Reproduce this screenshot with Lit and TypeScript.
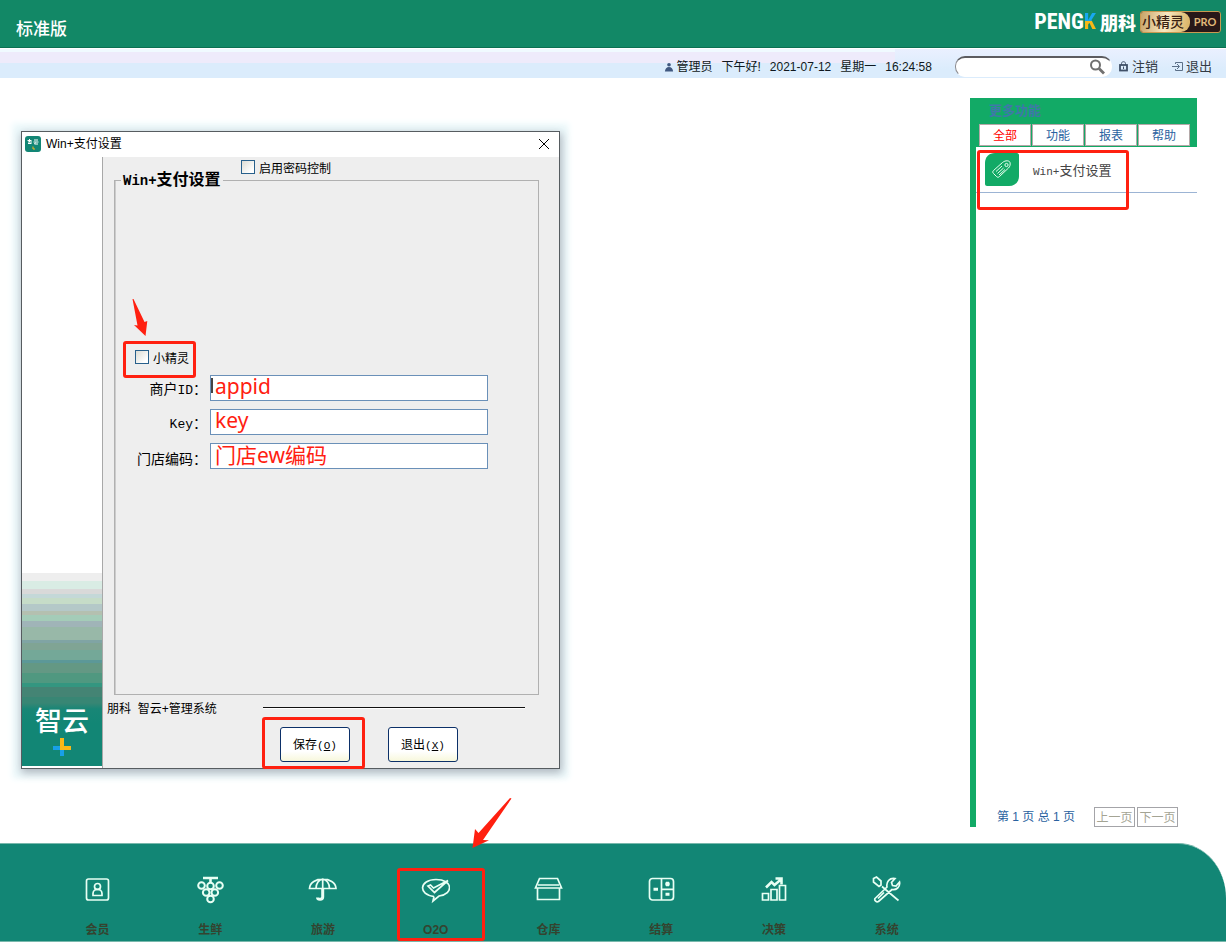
import { LitElement, html, css, svg } from "lit";
import { customElement, property, state } from "lit/decorators.js";
import { classMap } from "lit/directives/class-map.js";

const NAV = [
  {
    name: "会员",
    icon: svg`<rect x="3.500" y="4" width="22" height="21" rx="2"/><circle cx="14.500" cy="11.500" r="3"/><path d="M10 20.500v-2c0-5.500 9-5.500 9 0v2z"/>`,
  },
  {
    name: "生鲜",
    icon: svg`<path d="M7 3h15M14.500 3v5" stroke-width="2.600"/><g stroke-width="2"><circle cx="5.500" cy="10.500" r="3.300"/><circle cx="14.500" cy="11" r="3.300"/><circle cx="23.500" cy="10.500" r="3.300"/><circle cx="10.200" cy="17.500" r="3.300"/><circle cx="18.800" cy="17.500" r="3.300"/><circle cx="14.500" cy="24" r="3.300"/></g>`,
  },
  {
    name: "旅游",
    icon: svg`<path d="M1.500 13.500C2 1 27.500 1 28 13.500zM8 13.500C8 8 11 4.500 14.700 4.200 18.500 4.500 21.500 8 21.500 13.500M14.700 4v10"/><path d="M14.700 13v9c0 3-5 3-5.200.5" stroke-width="3"/>`,
  },
  {
    name: "O2O",
    marked: true,
    icon: svg`<path d="M13 21.500C-3 20-2 4.500 15 4.500s18 14.500 3 16.500l-6 5 1-4.500"/><path d="M7 11l2.500-1 3 3L27 5.500 13.500 17.500z"/>`,
  },
  {
    name: "仓库",
    icon: svg`<path d="M5.500 3.500h18l4 9.500h-26zM4 10h21M3.500 13v11.500h22V13"/>`,
  },
  {
    name: "结算",
    icon: svg`<rect x="2.500" y="3.500" width="24" height="21.500" rx="3"/><path d="M14.500 3.500V25M14.500 14.300h12"/><path d="M6.500 14.300h4.500M18.300 9h4.400M20.500 6.800v4.400M18.500 19.300h4" stroke-width="3"/>`,
  },
  {
    name: "决策",
    icon: svg`<path d="M2.500 18.500h6V25h-6zM11 14.500h6V25h-6zM19.500 10.500h6V25h-6z"/><path d="M6 12.500l5.500-5.500 3 3 7-6M15.500 3.500h6V9.500" stroke-width="2.600"/>`,
  },
  {
    name: "系统",
    icon: svg`<path d="M1.500 3.500l3-1.500 4.500 4v4l-2 1.500-5.500-4.500zM10 11.500l7 6 9.500 8M3 23.500l12-11.500c-1-5 2.500-9.500 8-8.500l-3.500 4 1 3 3.500.5 3.500-4c1 5-3.500 8.500-7.500 7.500L6.500 26.500c-2 1-4.500-1-3.500-3zM6 23.500l6-6"/>`,
  },
];

@customElement("top-banner")
class TopBanner extends LitElement {
  static styles = css`
    :host {
      display: flex;
      justify-content: space-between;
      align-items: center;
      height: 48px;
      box-sizing: border-box;
      padding: 0 5px 4px 16px;
      background: #128866;
      border-bottom: 1px solid #0b7052;
      color: #fff;
    }
    .edition {
      padding-top: 16px;
      font-size: 17px;
      font-weight: 500;
      line-height: 20px;
    }
    .brand {
      display: flex;
      align-items: center;
      gap: 4px;
      white-space: nowrap;
    }
    .name {
      font: 700 22px/24px "Roboto Condensed", "Liberation Sans", sans-serif;
    }
    .k {
      background: linear-gradient(#18a8f0 50%, #f8b818 50%);
      -webkit-background-clip: text;
      background-clip: text;
      color: transparent;
    }
    .cn {
      font: 900 18px/24px "Noto Sans CJK SC", sans-serif;
    }
    .badge {
      display: flex;
      box-sizing: border-box;
      width: 81px;
      height: 22px;
      border: 1px solid #c89a50;
      border-radius: 3px;
      overflow: hidden;
      background: #281818;
      font: 500 14px/19px "Noto Sans CJK SC", sans-serif;
      color: #382010;
    }
    .cnbadge {
      width: 48px;
      padding-left: 1px;
      background: linear-gradient(100deg, #c8a468, #f8e8c0 50%, #d8b060);
      border-radius: 0 9px 9px 0;
    }
    .pro {
      flex: 1;
      text-align: center;
      font: 700 11px/20px Lato, sans-serif;
      color: #e0b878;
    }
  `;
  render() {
    return html`
      <div class="edition">标准版</div>
      <div class="brand">
        <span class="name">PENG<span class="k">K</span></span>
        <span class="cn">朋科</span>
        <span class="badge"><span class="cnbadge">小精灵</span><span class="pro">PRO</span></span>
      </div>
    `;
  }
}

@customElement("status-bar")
class StatusBar extends LitElement {
  static styles = css`
    :host {
      display: flex;
      justify-content: flex-end;
      align-items: center;
      height: 29px;
      margin-top: 1px;
      box-sizing: border-box;
      padding: 6px 14px 0 0;
      background:
        linear-gradient(#f0faff 3px, #eeebfb 3px, #eeebfb 14px, #dbecfc 14px) left / 73% 100% no-repeat,
        linear-gradient(#eaf0ff, #dbecfc 70%);
      font-size: 12px;
      line-height: 20px;
      color: #101820;
      white-space: nowrap;
    }
    svg {
      display: block;
      flex: none;
    }
    .info {
      display: flex;
      align-items: center;
      gap: 9px;
      margin-right: 23px;
    }
    .user {
      display: flex;
      align-items: center;
      gap: 2px;
    }
    .search {
      display: flex;
      align-items: center;
      box-sizing: border-box;
      width: 157px;
      height: 21px;
      padding: 0 6px 0 10px;
      margin-right: 6px;
      border: 1px solid #fff;
      border-top: 2px solid #5c5c60;
      border-left-color: #8c8c90;
      border-radius: 10px;
      background: #fff;
    }
    .search input {
      flex: 1;
      min-width: 0;
      border: 0;
      padding: 0;
      outline: 0;
      background: none;
    }
    .search button {
      border: 0;
      padding: 0;
      background: none;
    }
    .link {
      display: flex;
      align-items: center;
      gap: 3px;
      margin-left: 14px;
      font-size: 13px;
      color: #333a44;
      text-decoration: none;
    }
    .search + .link {
      margin-left: 0;
    }
  `;
  render() {
    return html`
      <div class="info">
        <span class="user">
          <svg width="10" height="12" viewBox="0 0 11 12" fill="#405880">
            <circle cx="5.500" cy="3.500" r="2" /><path d="M1 11c0-3 2-5 4.500-5S10 8 10 11z" />
          </svg>
          管理员
        </span>
        <span>下午好!</span>
        <time>2021-07-12</time>
        <span>星期一</span>
        <time>16:24:58</time>
      </div>
      <div class="search">
        <input type="text" aria-label="搜索" />
        <button aria-label="搜索">
          <svg width="16" height="16" viewBox="0 0 16 16" fill="none" stroke="#707070">
            <circle cx="6.500" cy="6" r="4.500" stroke-width="2" /><path d="M10 9.500l5 5" stroke-width="2.800" />
          </svg>
        </button>
      </div>
      <a class="link" href="#">
        <svg width="11" height="12" viewBox="0 0 11 12" fill="none" stroke="#405068">
          <path d="M3.500 4V2.500c0-2.400 4-2.400 4 0V4" /><rect x="2" y="4" width="7" height="5.500" stroke-width="1.800" /><path d="M5.500 5.500v2.500" />
        </svg>
        注销
      </a>
      <a class="link" href="#">
        <svg width="11" height="12" viewBox="0 0 11 12" fill="none" stroke="#5c7088">
          <path d="M3.500 3V1.500h7v8h-7V8M0 5.500h7M5 3l2.500 2.500L5 8" />
        </svg>
        退出
      </a>
    `;
  }
}

@customElement("settings-dialog")
class SettingsDialog extends LitElement {
  static styles = css`
    :host {
      display: flex;
      flex-direction: column;
      box-sizing: border-box;
      width: 539px;
      height: 638px;
      border: 1px solid #565c60;
      background: #fff;
      box-shadow: 1px 3px 8px 1px rgba(60, 60, 80, 0.35), 0 1px 6px 9px #eefafc;
      font-size: 12px;
      color: #000;
    }
    svg {
      display: block;
      flex: none;
    }
    .mono {
      font-family: "Liberation Mono", monospace;
    }
    .title {
      display: flex;
      align-items: center;
      gap: 5px;
      height: 25px;
      padding: 0 9px 2px 3px;
      box-sizing: border-box;
      line-height: 20px;
    }
    .title h1 {
      flex: 1;
      margin: 0;
      font-size: 12px;
      font-weight: 400;
    }
    .close {
      border: 0;
      padding: 0;
      background: none;
    }
    .body {
      display: flex;
      flex: 1;
      min-height: 0;
    }
    .side {
      display: flex;
      flex-direction: column;
      justify-content: flex-end;
      width: 80px;
      padding-bottom: 2px;
      border-right: 1px solid #a8a8a8;
    }
    .art {
      display: flex;
      flex-direction: column;
      align-items: center;
      gap: 1px;
      box-sizing: border-box;
      height: 193px;
      padding-top: 134px;
      background: linear-gradient(
        #eeeeee 8px, #d9ece4 8px 16px, #d9d9d9 16px 21px, #c4d8d8 21px 25px, #c6dcc8 25px 31px,
        #b4c8c8 31px 38px, #b4c0b0 38px 42px, #a4ccb8 42px 48px, #a0b4b8 48px 54px, #98b8a8 54px 67px,
        #80a4a4 67px 70px, #80a494 70px 77px, #74a898 77px 87px, #5c9898 87px 90px, #649884 90px 100px,
        #509880 100px 110px, #349680 110px 114px, #448474 114px 124px, #388674 124px 130px, #188676 136px, #128675 150px
      );
      color: #fff;
      font-size: 27px;
      font-weight: 500;
      line-height: 30px;
    }
    .content {
      display: flex;
      flex: 1;
      flex-direction: column;
      background: #eee;
    }
    .check {
      display: flex;
      align-items: center;
      gap: 4px;
      height: 20px;
    }
    .check input {
      appearance: none;
      width: 14px;
      height: 14px;
      margin: 0;
      border: 1px solid #28608c;
      background: linear-gradient(135deg, #dcdcd4, #fff 80%);
    }
    .password {
      align-self: flex-start;
      margin-left: 138px;
    }
    fieldset {
      flex: 1;
      min-width: 0;
      margin: -6px 20px 0 11px;
      padding: 0 0 0 20px;
      border: 1px solid #b0b0b0;
      box-shadow: inset 1px 0 #ccc;
    }
    legend {
      margin-left: -14px;
      padding: 0 2px;
      font-size: 16px;
      font-weight: 700;
      line-height: 17px;
    }
    legend .mono {
      font-size: 14px;
    }
    .sprite {
      position: relative;
      width: max-content;
      margin: 157px 0 8px;
    }
    .row {
      display: grid;
      grid-template-columns: 72px 278px;
      gap: 3px;
      align-items: end;
      height: 26px;
      margin-bottom: 8px;
      font-size: 14px;
      line-height: 20px;
    }
    .row label {
      text-align: right;
      white-space: nowrap;
    }
    .row .mono {
      font-size: 13px;
    }
    .field {
      position: relative;
      height: 26px;
    }
    .field input {
      box-sizing: border-box;
      width: 100%;
      height: 26px;
      padding: 0 4px 4px;
      border: 1px solid #6a90b8;
      outline: 0;
      background: #fff;
      color: #ff2010;
      font: 21px/20px "Noto Sans", "Noto Sans CJK SC", sans-serif;
    }
    .caret {
      position: absolute;
      left: 1px;
      top: 3px;
      width: 2px;
      height: 15px;
      background: #444;
    }
    .foot {
      height: 73px;
      padding-left: 4px;
    }
    .company {
      display: flex;
      align-items: center;
      height: 24px;
      padding-right: 34px;
    }
    .company span {
      width: 156px;
    }
    .rule {
      flex: 1;
      height: 1px;
      background: #111;
      box-shadow: 0 1px #fff;
    }
    .actions {
      display: flex;
      gap: 38px;
      padding: 8px 0 0 173px;
    }
    .actions button {
      position: relative;
      width: 70px;
      height: 35px;
      padding: 0;
      border: 1px solid #0c3068;
      border-radius: 3px;
      background: linear-gradient(#fff 70%, #f8f8dc);
      font: 12px/20px "Noto Sans CJK SC", sans-serif;
      color: #000;
    }
    .actions .mono {
      font-size: 11px;
    }
    .mark {
      position: absolute;
      border: 3px solid #ff2010;
      border-radius: 3px;
      pointer-events: none;
    }
    .mark.sprite-mark {
      inset: -6px -7px -11px -12px;
    }
    .mark.save-mark {
      inset: -11px -16px -8px -19px;
    }
    .pointer {
      position: absolute;
      left: -3px;
      top: -48px;
    }
  `;
  render() {
    return html`
      <div class="title">
        <svg width="16" height="16" viewBox="0 0 16 16">
          <rect width="16" height="16" rx="3" fill="#128675" />
          <path d="M2.500 4.500h4M4.500 3v3M3 7.500h3.500M3 6h4M9 4h4M8.500 6h5M10.500 6.500l-1 1.500h3.500" stroke="#fff" fill="none" />
          <path d="M8 10.500v2.500h2" stroke="#f8b818" fill="none" />
        </svg>
        <h1>Win+支付设置</h1>
        <button class="close" aria-label="关闭">
          <svg width="12" height="12" viewBox="0 0 12 12" stroke="#000"><path d="M1 1l10 10M11 1L1 11" /></svg>
        </button>
      </div>
      <div class="body">
        <div class="side">
          <div class="art">
            <span>智云</span>
            <svg width="18" height="18" viewBox="0 0 18 18">
              <path d="M0 8h7v4h4v6H7v-6H0z" fill="#18a0e8" /><path d="M7 0h4v8h7v4H7z" fill="#f8b818" />
            </svg>
          </div>
        </div>
        <div class="content">
          <label class="check password"><input type="checkbox" />启用密码控制</label>
          <fieldset>
            <legend><span class="mono">Win+</span>支付设置</legend>
            <label class="check sprite">
              <input type="checkbox" />小精灵
              <span class="mark sprite-mark"></span>
              <svg class="pointer" width="16" height="38" viewBox="0 0 16 38" fill="#ff2010">
                <path d="M.5 0h1L12.500 23l2.800-1L13.500 37 2 26l3.500.5z" />
              </svg>
            </label>
            <div class="row">
              <label for="merchant">商户<span class="mono">ID</span>：</label>
              <div class="field"><input id="merchant" type="text" .value=${"appid"} /><span class="caret"></span></div>
            </div>
            <div class="row">
              <label for="key"><span class="mono">Key</span>：</label>
              <div class="field"><input id="key" type="text" .value=${"key"} /></div>
            </div>
            <div class="row">
              <label for="shop">门店编码：</label>
              <div class="field"><input id="shop" type="text" .value=${"门店ew编码"} /></div>
            </div>
          </fieldset>
          <div class="foot">
            <div class="company"><span>朋科&nbsp; 智云+管理系统</span><div class="rule"></div></div>
            <div class="actions">
              <button>保存<span class="mono">(<u>O</u>)</span><span class="mark save-mark"></span></button>
              <button>退出<span class="mono">(<u>X</u>)</span></button>
            </div>
          </div>
        </div>
      </div>
    `;
  }
}

@customElement("feature-panel")
class FeaturePanel extends LitElement {
  @state() private tab = "全部";

  static styles = css`
    :host {
      display: flex;
      flex-direction: column;
      box-sizing: border-box;
      width: 227px;
      border-left: 6px solid #12aa66;
      color: #2a62a0;
      font-size: 12px;
    }
    header {
      padding: 0 7px 1px 3px;
      background: #12aa66;
    }
    h2 {
      margin: 0;
      padding-left: 10px;
      font-size: 13px;
      font-weight: 700;
      line-height: 26px;
      color: #3f78a8;
    }
    .tabs {
      display: grid;
      grid-template-columns: repeat(4, 1fr);
      gap: 1px;
    }
    .tabs button {
      height: 22px;
      padding: 0;
      border: 1px solid #b4a8a8;
      background: #fff;
      font: 12px/18px "Noto Sans CJK SC", sans-serif;
      color: #2a62a0;
    }
    .tabs .on {
      color: #f00;
    }
    .item {
      position: relative;
      display: flex;
      align-items: center;
      gap: 14px;
      height: 45px;
      padding-left: 9px;
      border-bottom: 1px solid #9cb4d4;
      color: #444;
      font-size: 13px;
      text-decoration: none;
    }
    .mono {
      font: 11px "Liberation Mono", monospace;
    }
    .mark {
      position: absolute;
      left: 1px;
      top: 3px;
      width: 146px;
      height: 54px;
      border: 3px solid #ff2010;
      border-radius: 3px;
    }
    .pager {
      display: flex;
      align-items: center;
      gap: 2px;
      margin-top: auto;
      padding-left: 21px;
      line-height: 20px;
    }
    .count {
      width: 95px;
      white-space: nowrap;
    }
    .pager button {
      width: 41px;
      height: 20px;
      padding: 0;
      border: 1px solid #a4a4a8;
      background: #fff;
      font: 12px/16px "Noto Sans CJK SC", sans-serif;
      color: #a4a494;
    }
  `;
  render() {
    return html`
      <header>
        <h2>更多功能</h2>
        <div class="tabs">
          ${["全部", "功能", "报表", "帮助"].map(
            (t) => html`<button class=${classMap({ on: t === this.tab })} @click=${() => (this.tab = t)}>${t}</button>`
          )}
        </div>
      </header>
      <a class="item" href="#">
        <svg width="34" height="33" viewBox="0 0 34 33" fill="none" stroke="#e8fff0">
          <path d="M10 0h22c1 0 2 1 2 2v21c0 6-4 10-10 10H2c-1 0-2-1-2-2V10C0 4 4 0 10 0z" fill="#12aa66" stroke="none" />
          <path d="M8.500 17.500l9-8c3-2.500 7-2 7.500 0s0 4-1.500 5.500l-9 8.500c-1 1-2 1-3 0l-3-3c-1-1-1-2 0-3zM11 18.500l6-5.500M12.500 20.500l6-5.500M14 22l6-5.500" />
          <circle cx="21.500" cy="12" r="1.600" />
        </svg>
        <span><span class="mono">Win+</span>支付设置</span>
        <span class="mark"></span>
      </a>
      <div class="pager">
        <span class="count">第 1 页 总 1 页</span>
        <button disabled>上一页</button>
        <button disabled>下一页</button>
      </div>
    `;
  }
}

@customElement("module-nav")
class ModuleNav extends LitElement {
  @property({ attribute: false }) items = NAV;

  static styles = css`
    :host {
      display: block;
      padding-bottom: 1px;
    }
    nav {
      display: grid;
      grid-template-columns: repeat(8, 9.2vw);
      box-sizing: border-box;
      height: 99px;
      padding-left: 41px;
      border-top: 1px solid #78b8ac;
      border-bottom: 1px solid #78b8ac;
      border-top-right-radius: 48px 55px;
      background: #128675;
    }
    a {
      position: relative;
      display: flex;
      flex-direction: column;
      align-items: center;
      gap: 16px;
      padding-top: 31px;
      font-size: 12px;
      font-weight: 700;
      line-height: 20px;
      color: #34432f;
      text-decoration: none;
    }
    svg {
      display: block;
    }
    .mark {
      position: absolute;
      inset: 24px 7px 0 18px;
      border: 3px solid #ff2010;
      border-radius: 3px;
    }
    .pointer {
      position: absolute;
      left: 93px;
      top: -46px;
    }
  `;
  render() {
    return html`
      <nav>
        ${this.items.map(
          (m) => html`<a href="#">
            <svg width="29" height="29" viewBox="0 0 29 29" fill="none" stroke="#e8fff4" stroke-width="1.700">${m.icon}</svg>
            <span>${m.name}</span>
            ${m.marked
              ? html`<span class="mark"></span>
                  <svg class="pointer" width="40" height="50" viewBox="0 0 40 50" fill="#ff2010">
                    <path d="M38 0l1.500.5L11 42l6 .2L.500 50 3 31l3.500 4z" />
                  </svg>`
              : ""}
          </a>`
        )}
      </nav>
    `;
  }
}

@customElement("app-root")
class AppRoot extends LitElement {
  static styles = css`
    :host {
      display: flex;
      flex-direction: column;
      min-height: 100vh;
      background: #fff;
      font-family: "Liberation Sans", "Noto Sans CJK SC", sans-serif;
    }
    main {
      position: relative;
      display: flex;
      flex: 1;
      justify-content: flex-end;
      min-height: 720px;
      box-sizing: border-box;
      padding: 20px 29px 16px;
    }
    settings-dialog {
      position: absolute;
      left: 21px;
      top: 53px;
    }
  `;
  render() {
    return html`
      <top-banner></top-banner>
      <status-bar></status-bar>
      <main>
        <settings-dialog></settings-dialog>
        <feature-panel></feature-panel>
      </main>
      <module-nav></module-nav>
    `;
  }
}
